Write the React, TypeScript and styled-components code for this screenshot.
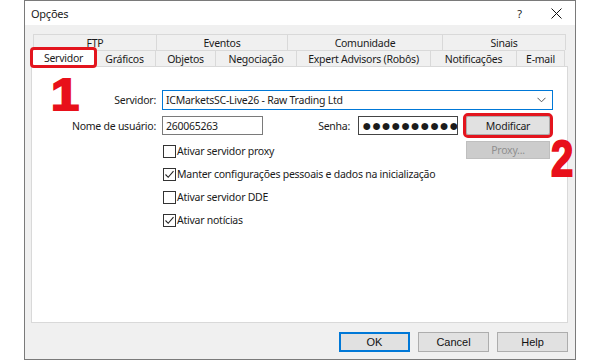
import styled, { createGlobalStyle } from 'styled-components';

const GlobalStyle = createGlobalStyle`
  html, body { margin: 0; background: #fff; }
  body {
    font-family: "Noto Sans", "Open Sans", sans-serif;
    font-size: 10.5px;
    letter-spacing: -0.25px;
    color: #1b1b1b;
  }
  * { box-sizing: border-box; }
`;

const Page = styled.div`
  position: relative;
  width: 600px;
  height: 360px;
  padding-left: 24px;
  overflow: hidden;
`;

const Window = styled.div`
  width: 552px;
  height: 360px;
  border: 1px solid #7a7a7a;
  background: #f0f0f0;
  display: flex;
  flex-direction: column;
`;

const TitleBar = styled.div`
  height: 24px;
  background: #fff;
  display: flex;
  align-items: center;
  padding-left: 6px;
`;

const Title = styled.span`
  font-size: 11px;
  flex: 1;
`;

const TitleButton = styled.div`
  width: 37px;
  height: 24px;
  display: flex;
  align-items: center;
  justify-content: center;
  font-size: 11px;
`;

const Body = styled.div`
  flex: 1;
  padding: 9px 7px 0 6px;
  display: flex;
  flex-direction: column;
`;

const TabStrip = styled.div`
  padding: 0 2px;
  display: flex;
  flex-direction: column;
`;

const TabRow = styled.div`
  display: flex;
  height: 16px;
`;

const Tab = styled.div<{ $w: number; $first?: boolean; $active?: boolean; $marked?: boolean }>`
  width: ${p => p.$w}px;
  height: ${p => (p.$active ? 19 : 16)}px;
  margin-top: ${p => (p.$active ? -2 : 0)}px;
  margin-left: ${p => (p.$active ? -2 : 0)}px;
  margin-right: ${p => (p.$active ? -2 : 0)}px;
  position: relative;
  z-index: ${p => (p.$active ? 2 : 1)};
  background: ${p => (p.$active ? '#fff' : '#f0f0f0')};
  border-top: 1px solid #d9d9d9;
  border-right: 1px solid #d9d9d9;
  border-left: ${p => (p.$first || p.$active ? '1px solid #d9d9d9' : 'none')};
  display: flex;
  align-items: center;
  justify-content: center;
  white-space: nowrap;
  ${p => p.$marked && `
    outline: 3px solid #e3151e;
    outline-offset: -2px;
    border-radius: 3px;
  `}
`;

const Panel = styled.div`
  height: 257px;
  background: #fff;
  border: 1px solid #d9d9d9;
  padding-top: 23px;
`;

const FormGrid = styled.div`
  display: grid;
  grid-template-columns: 130px 101px 95px 100px 95px;
  grid-template-rows: 20px 19px auto;
  row-gap: 6px;
`;

const Label = styled.label<{ $pad?: number }>`
  align-self: center;
  text-align: right;
  padding-right: ${p => p.$pad ?? 6}px;
  white-space: nowrap;
`;

const Combo = styled.div`
  grid-column: 2 / 6;
  width: 391px;
  border: 1px solid #0078d7;
  background: #fff;
  display: flex;
  align-items: center;
  padding: 0 6px 0 3px;
`;

const ComboText = styled.span`
  flex: 1;
`;

const TextBox = styled.div<{ $dark?: boolean }>`
  border: 1px solid ${p => (p.$dark ? '#444' : '#7a7a7a')};
  background: #fff;
  display: flex;
  align-items: center;
  padding-left: 3px;
  overflow: hidden;
  white-space: nowrap;
`;

const Dots = styled.span`
  font-family: "Liberation Sans", sans-serif;
  font-size: 16px;
  letter-spacing: 0;
  line-height: 1;
`;

const PushButton = styled.div<{ $disabled?: boolean; $marked?: boolean; $h?: number }>`
  margin-left: 8px;
  width: 84px;
  height: ${p => p.$h ?? 19}px;
  background: ${p => (p.$disabled ? '#cccccc' : '#e1e1e1')};
  border: 1px solid ${p => (p.$disabled ? '#bfbfbf' : '#adadad')};
  color: ${p => (p.$disabled ? '#8f8f8f' : '#1b1b1b')};
  display: flex;
  align-items: center;
  justify-content: center;
  ${p => p.$marked && `
    outline: 3px solid #e3151e;
    outline-offset: 0px;
    border-radius: 2px;
  `}
`;

const CheckList = styled.div`
  grid-column: 2 / 5;
  display: flex;
  flex-direction: column;
  gap: 3px;
  padding-left: 1px;
`;

const CheckRow = styled.div`
  height: 20px;
  display: flex;
  align-items: center;
  gap: 1px;
  white-space: nowrap;
`;

const Box = styled.span`
  width: 13px;
  height: 13px;
  border: 1px solid #333;
  background: #fff;
  display: flex;
  align-items: center;
  justify-content: center;
`;

const Footer = styled.div`
  display: flex;
  justify-content: flex-end;
  gap: 8px;
  padding-top: 9px;
`;

const DialogButton = styled.div<{ $default?: boolean }>`
  width: 71px;
  height: 20px;
  background: #e1e1e1;
  border: 1px solid ${p => (p.$default ? '#0078d7' : '#adadad')};
  box-shadow: ${p => (p.$default ? 'inset 0 0 0 1px #0078d7' : 'none')};
  display: flex;
  align-items: center;
  justify-content: center;
  font-family: "Liberation Sans", sans-serif;
  font-size: 11px;
  letter-spacing: 0;
  color: #111;
`;

const Marker = styled.div<{ $x: number; $y: number; $size: number; $sx: number }>`
  position: absolute;
  left: ${p => p.$x}px;
  top: ${p => p.$y}px;
  font-family: "Liberation Sans", sans-serif;
  font-weight: 700;
  font-size: ${p => p.$size}px;
  letter-spacing: 0;
  line-height: 1;
  color: #e8101a;
  -webkit-text-stroke: 2px #e8101a;
  transform: scaleX(${p => p.$sx});
  transform-origin: left top;
`;

const Check = ({ on }: { on: boolean }) => (
  <Box>
    {on && (
      <svg width="11" height="11" viewBox="0 0 11 11">
        <polyline points="1.5,5.5 4.2,8.3 9.5,2.2" fill="none" stroke="#222" strokeWidth="1.1" />
      </svg>
    )}
  </Box>
);

const topTabs = [
  { label: 'FTP', w: 124 },
  { label: 'Eventos', w: 131 },
  { label: 'Comunidade', w: 155 },
  { label: 'Sinais', w: 123 },
];

const bottomTabs = [
  { label: 'Servidor', w: 62 },
  { label: 'Gráficos', w: 62 },
  { label: 'Objetos', w: 60 },
  { label: 'Negociação', w: 81 },
  { label: 'Expert Advisors (Robôs)', w: 134 },
  { label: 'Notificações', w: 86 },
  { label: 'E-mail', w: 48 },
];

const options = [
  { label: 'Ativar servidor proxy', on: false },
  { label: 'Manter configurações pessoais e dados na inicialização', on: true },
  { label: 'Ativar servidor DDE', on: false },
  { label: 'Ativar notícias', on: true },
];

export default function App() {
  return (
    <Page>
      <GlobalStyle />
      <Window>
        <TitleBar>
          <Title>Opções</Title>
          <TitleButton>?</TitleButton>
          <TitleButton>
            <svg width="11" height="11" viewBox="0 0 11 11">
              <path d="M0.5 0.5 L10.5 10.5 M10.5 0.5 L0.5 10.5" stroke="#111" strokeWidth="1" />
            </svg>
          </TitleButton>
        </TitleBar>
        <Body>
          <TabStrip>
            <TabRow>
              {topTabs.map((t, i) => (
                <Tab key={t.label} $w={t.w} $first={i === 0}>{t.label}</Tab>
              ))}
            </TabRow>
            <TabRow>
              {bottomTabs.map((t, i) => (
                <Tab
                  key={t.label}
                  $w={i === 0 ? t.w + 3 : t.w}
                  $first={i === 0}
                  $active={i === 0}
                  $marked={i === 0}
                >
                  {t.label}
                </Tab>
              ))}
            </TabRow>
          </TabStrip>
          <Panel>
            <FormGrid>
              <Label>Servidor:</Label>
              <Combo>
                <ComboText>ICMarketsSC-Live26 - Raw Trading Ltd</ComboText>
                <svg width="9" height="6" viewBox="0 0 9 6">
                  <polyline points="0.5,0.8 4.5,4.8 8.5,0.8" fill="none" stroke="#555" strokeWidth="1" />
                </svg>
              </Combo>

              <Label>Nome de usuário:</Label>
              <TextBox>260065263</TextBox>
              <Label $pad={8}>Senha:</Label>
              <TextBox $dark><Dots>●●●●●●●●●●●</Dots></TextBox>
              <PushButton $marked>Modificar</PushButton>

              <CheckList>
                {options.map(o => (
                  <CheckRow key={o.label}>
                    <Check on={o.on} />
                    {o.label}
                  </CheckRow>
                ))}
              </CheckList>
              <PushButton $disabled $h={18}>Proxy...</PushButton>
            </FormGrid>
          </Panel>
          <Footer>
            <DialogButton $default>OK</DialogButton>
            <DialogButton>Cancel</DialogButton>
            <DialogButton>Help</DialogButton>
          </Footer>
        </Body>
      </Window>
      <Marker $x={51} $y={73} $size={44} $sx={1.15}>1</Marker>
      <Marker $x={551} $y={134} $size={50} $sx={0.8}>2</Marker>
    </Page>
  );
}
